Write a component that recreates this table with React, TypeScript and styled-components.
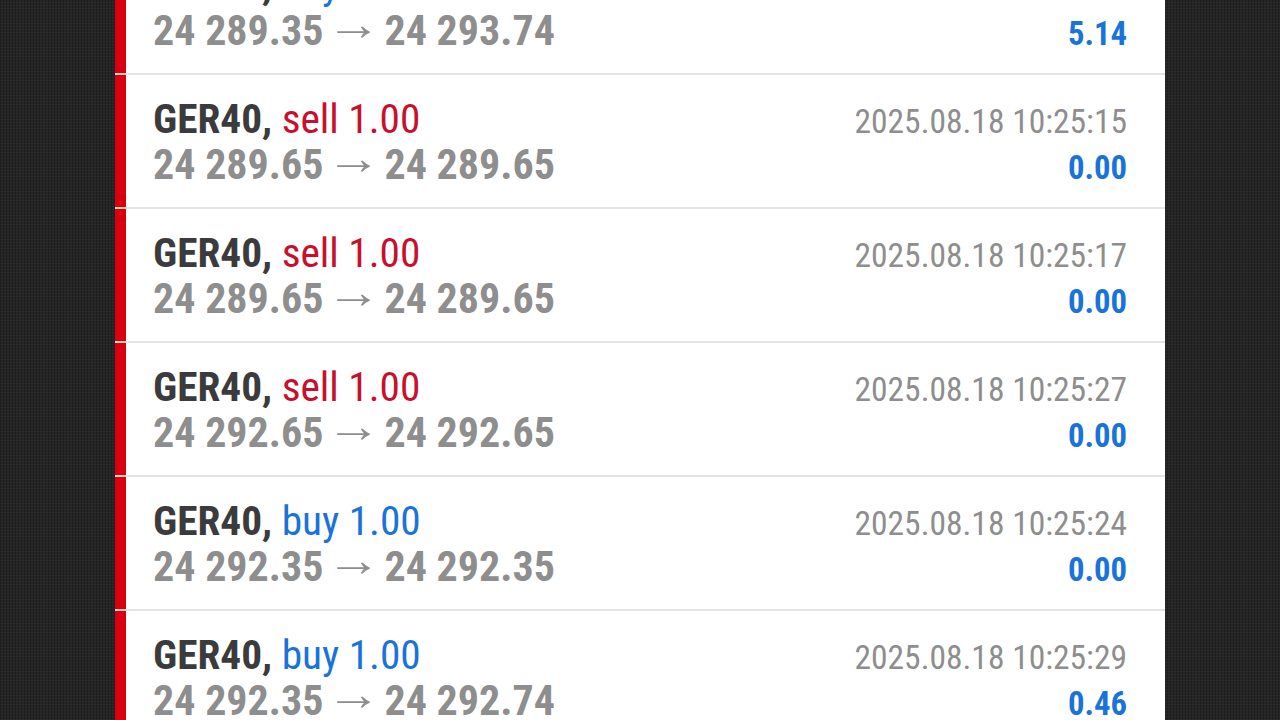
import React from "react";
import styled, { createGlobalStyle } from "styled-components";

const Global = createGlobalStyle`
  html, body {
    margin: 0;
    padding: 0;
    height: 100%;
    overflow: hidden;
  }
  body {
    background-color: #252525;
    background-image:
      repeating-linear-gradient(0deg, rgba(255,255,255,0.025) 0 1px, transparent 1px 3px),
      repeating-linear-gradient(90deg, rgba(0,0,0,0.18) 0 1px, transparent 1px 3px);
    font-family: "Roboto Condensed", Roboto, "Liberation Sans", sans-serif;
  }
`;

const Page = styled.div`
  display: flex;
  justify-content: center;
  height: 720px;
  overflow: hidden;
`;

const Panel = styled.div`
  width: 1050px;
  margin-top: -59px;
  display: flex;
  flex-direction: column;
  background: #ffffff;
  align-self: flex-start;
`;

const Row = styled.div`
  display: flex;
  height: 134px;
`;

const Accent = styled.div`
  width: 11px;
  flex: none;
  background: #d90012;
  border-bottom: 2px solid #f6d3c2;
  box-sizing: border-box;
`;

const Content = styled.div`
  flex: 1;
  display: flex;
  justify-content: space-between;
  padding: 21px 38px 0 27px;
  border-bottom: 2px solid #e4e4e4;
  box-sizing: border-box;
`;

const Column = styled.div<{ $right?: boolean }>`
  display: flex;
  flex-direction: column;
  align-items: ${(p) => (p.$right ? "flex-end" : "flex-start")};
  padding-top: ${(p) => (p.$right ? "3px" : "0")};
`;

const Title = styled.div`
  font-size: 41.3px;
  line-height: 46px;
  color: #3b3b3d;
  white-space: nowrap;
`;

const Symbol = styled.span`
  font-weight: 700;
`;

const Side = styled.span<{ $type: "buy" | "sell" }>`
  font-weight: 400;
  color: ${(p) => (p.$type === "sell" ? "#c8102e" : "#1a73d9")};
`;

const Prices = styled.div`
  display: flex;
  align-items: center;
  height: 46px;
  font-size: 42px;
  line-height: 46px;
  font-weight: 700;
  color: #8e8e8e;
  white-space: nowrap;
`;

const Arrow = styled.span`
  display: inline-block;
  width: 32px;
  margin: 0 15px 0 14px;
  text-align: center;
  font-size: 46px;
  line-height: 46px;
  font-weight: 400;
  transform: translate(-7.5px, -7px) scaleX(1.2);
`;

const DateText = styled.div`
  font-size: 33.5px;
  line-height: 46px;
  color: #8e8e8e;
  white-space: nowrap;
`;

const Profit = styled.div`
  font-size: 32.7px;
  line-height: 46px;
  font-weight: 700;
  color: #1a73d9;
`;

type Deal = {
  side: "buy" | "sell";
  from: string;
  to: string;
  time: string;
  profit: string;
};

const deals: Deal[] = [
  { side: "buy", from: "24 289.35", to: "24 293.74", time: "2025.08.18 10:25:10", profit: "5.14" },
  { side: "sell", from: "24 289.65", to: "24 289.65", time: "2025.08.18 10:25:15", profit: "0.00" },
  { side: "sell", from: "24 289.65", to: "24 289.65", time: "2025.08.18 10:25:17", profit: "0.00" },
  { side: "sell", from: "24 292.65", to: "24 292.65", time: "2025.08.18 10:25:27", profit: "0.00" },
  { side: "buy", from: "24 292.35", to: "24 292.35", time: "2025.08.18 10:25:24", profit: "0.00" },
  { side: "buy", from: "24 292.35", to: "24 292.74", time: "2025.08.18 10:25:29", profit: "0.46" },
];

export default function App() {
  return (
    <>
      <Global />
      <Page>
        <Panel>
          {deals.map((d, i) => (
            <Row key={i}>
              <Accent />
              <Content>
                <Column>
                  <Title>
                    <Symbol>GER40,</Symbol> <Side $type={d.side}>{d.side} 1.00</Side>
                  </Title>
                  <Prices>
                    <span>{d.from}</span>
                    <Arrow>→</Arrow>
                    <span>{d.to}</span>
                  </Prices>
                </Column>
                <Column $right>
                  <DateText>{d.time}</DateText>
                  <Profit>{d.profit}</Profit>
                </Column>
              </Content>
            </Row>
          ))}
        </Panel>
      </Page>
    </>
  );
}
